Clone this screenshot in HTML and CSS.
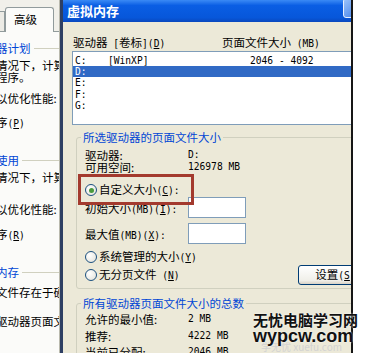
FILE: index.html
```html
<!DOCTYPE html>
<html lang="zh-CN">
<head>
  <meta charset="UTF-8">
  <meta name="viewport" content="width=device-width, initial-scale=1.0">
  <title>虚拟内存</title>
  <link rel="stylesheet" href="styles.css">
</head>
<body>
  <div class="screen">
    <!-- Performance options window (behind) -->
    <div class="side">
      <div class="tabs">
        <span class="tab tab-off"></span>
        <span class="tab tab-on">高级</span>
      </div>
      <div class="side-body">
        <p class="side-label mt10">器计划</p>
        <p class="mt5">情况下，计算机设置</p>
        <p>程序。</p>
        <p class="mt9">以优化性能:</p>
        <p class="mt12">序<span class="m">(<u>P</u>)</span></p>
        <p class="side-label mt24">使用</p>
        <p class="mt5">情况下，计算机设置</p>
        <p class="mt20">以优化性能:</p>
        <p class="mt13">序<span class="m">(<u>R</u>)</span></p>
        <p class="side-label mt24">内存</p>
        <p class="mt8">文件存在于硬盘</p>
        <p class="mt17">驱动器页面文件</p>
      </div>
    </div>

    <!-- Virtual memory dialog -->
    <div class="dialog">
      <div class="titlebar">
        <span class="title">虚拟内存</span>
        <span class="help"></span>
      </div>
      <div class="dialog-body">
        <div class="list-head">
          <span>驱动器<span class="m"> [</span>卷标<span class="m">](<u>D</u>)</span></span>
          <span>页面文件大小<span class="m"> (MB)</span></span>
        </div>
        <div class="drive-list">
          <div class="drive-row"><span>C:</span><span>[WinXP]</span><span>2046 - 4092</span></div>
          <div class="drive-row selected"><span>D:</span></div>
          <div class="drive-row"><span>E:</span></div>
          <div class="drive-row"><span>F:</span></div>
          <div class="drive-row"><span>G:</span></div>
        </div>

        <fieldset class="group group-drive">
          <legend>所选驱动器的页面文件大小</legend>
          <div class="info first"><span>驱动器:</span><span class="m">D:</span></div>
          <div class="info"><span>可用空间:</span><span class="m">126978 MB</span></div>
          <div class="choice marked">
            <span class="radio on"></span>
            <span>自定义大小<span class="m">(<u>C</u>):</span></span>
          </div>
          <div class="size-row r-initial">
            <span>初始大小<span class="m">(MB)(<u>I</u>):</span></span>
            <span class="textbox"></span>
          </div>
          <div class="size-row r-max">
            <span>最大值<span class="m">(MB)(<u>X</u>):</span></span>
            <span class="textbox"></span>
          </div>
          <div class="choice r-system">
            <span class="radio"></span>
            <span>系统管理的大小<span class="m">(<u>Y</u>)</span></span>
          </div>
          <div class="last-row">
            <div class="choice">
              <span class="radio"></span>
              <span>无分页文件<span class="m"> (<u>N</u>)</span></span>
            </div>
            <button type="button" class="btn">设置<span class="m">(<u>S</u>)</span></button>
          </div>
        </fieldset>

        <fieldset class="group group-total">
          <legend>所有驱动器页面文件大小的总数</legend>
          <div class="total first"><span>允许的最小值:</span><span class="m">2 MB</span></div>
          <div class="total"><span>推荐:</span><span class="m">4222 MB</span></div>
          <div class="total"><span>当前已分配:</span><span class="m">2046 MB</span></div>
        </fieldset>
      </div>
    </div>

    <!-- site watermark -->
    <div class="watermark">
      <span class="wm-faint">学无忧 xuefu.com</span>
      <p class="wm-cn">无忧电脑学习网</p>
      <p class="wm-en">wypcw.com</p>
    </div>
  </div>
</body>
</html>
```

FILE: styles.css
```css
/* Global */
* {
  margin: 0;
  padding: 0;
  box-sizing: border-box;
}
body {
  font-family: "Noto Sans CJK SC", sans-serif;
  font-size: 11.5px;
  color: #000;
  background: #fff;
  overflow: hidden;
}
.screen {
  position: relative;
  display: flex;
  height: 353px;
  overflow: hidden;
}
.m {
  font-family: "DejaVu Sans Mono", monospace;
  font-size: 9.6px;
}
u {
  text-decoration-thickness: 1px;
  text-underline-offset: 1px;
}

/* Window behind */
.side {
  width: 60px;
  flex: none;
  background: #fbfbf9;
  border-right: 1px solid #b9b9ad;
  overflow: hidden;
}
.tabs {
  height: 32px;
  display: flex;
  align-items: flex-end;
  background: #f1f0ea;
  border-bottom: 1px solid #919b9c;
}
.tab-off {
  width: 5px;
  height: 21px;
  margin-bottom: -1px;
  background: #ecebe5;
  border: 1px solid #919b9c;
  border-left: none;
}
.tab-on {
  width: 49px;
  height: 25px;
  margin-bottom: -1px;
  padding: 4px 0 0 8px;
  line-height: 14px;
  background: #fbfbf9;
  border: 1px solid #919b9c;
  border-bottom: none;
  border-radius: 3px 3px 0 0;
}
.side-body p {
  margin-left: -4px;
  line-height: 12px;
  white-space: nowrap;
}
.side-body .side-label {
  display: flex;
  align-items: center;
  color: #0046d5;
}
.side-label::after {
  content: "";
  flex: 1;
  height: 1px;
  margin-left: 3px;
  background: #d0d0bf;
}
.mt5 { margin-top: 5px; }
.mt8 { margin-top: 8px; }
.mt9 { margin-top: 9px; }
.mt10 { margin-top: 10px; }
.mt12 { margin-top: 12px; }
.mt13 { margin-top: 13px; }
.mt17 { margin-top: 17px; }
.mt20 { margin-top: 20px; }
.mt24 { margin-top: 24px; }

/* Dialog */
.dialog {
  width: 293px;
  flex: none;
  display: flex;
  flex-direction: column;
  border-left: 3px solid #2e3f63;
  border-right: 2px solid #161616;
}
.titlebar {
  height: 22px;
  flex: none;
  display: flex;
  align-items: center;
  padding-left: 4px;
  overflow: hidden;
  background: linear-gradient(#3a8af5, #0a5ee4 25%, #0757da 80%, #0a48be);
}
.title {
  color: #fff;
  font-size: 13px;
  font-weight: bold;
  line-height: 16px;
}
.help {
  align-self: flex-start;
  width: 21px;
  height: 20px;
  margin: -2px -13px 0 auto;
  border: 1px solid #e8f0ff;
  border-radius: 3px;
  background: linear-gradient(135deg, #9cc4fb, #3275e6);
}
.dialog-body {
  flex: 1;
  background: #ece9d8;
  padding-left: 9px;
  overflow: hidden;
}

/* Drive list */
.list-head {
  display: grid;
  grid-template-columns: 149px auto;
  margin-top: 13px;
  padding-left: 1px;
  line-height: 14px;
  white-space: nowrap;
}
.drive-list {
  width: 300px;
  height: 74px;
  padding-top: 2.5px;
  background: #fff;
  border: 1px solid #7f9db9;
}
.drive-row {
  display: grid;
  grid-template-columns: 33px 142px auto;
  height: 11.4px;
  padding-left: 2px;
  font-family: "DejaVu Sans Mono", monospace;
  font-size: 9.6px;
  line-height: 11.4px;
  white-space: pre;
}
.drive-row.selected {
  background: #316ac5;
  color: #fff;
}

/* Group boxes */
.group {
  width: 290px;
  min-width: 0;
  margin-left: 4px;
  padding: 0 0 0 8px;
  border: 1px solid #d0d0bf;
  border-radius: 3px;
}
.group legend {
  margin-left: -4px;
  padding: 0 2px;
  color: #0046d5;
  line-height: 14px;
}
.group-drive {
  margin-top: 5px;
  padding-bottom: 3px;
}
.group-total {
  margin-top: 7px;
}
.info {
  display: grid;
  grid-template-columns: 103px auto;
  line-height: 12px;
}
.info.first {
  margin-top: 5px;
}
.choice {
  display: flex;
  align-items: center;
  height: 12px;
  line-height: 12px;
  white-space: nowrap;
}
.choice.marked {
  position: relative;
  margin-top: 11px;
}
.choice.marked::after {
  content: "";
  position: absolute;
  left: -7px;
  top: -10px;
  width: 110px;
  height: 25px;
  border: 3px solid #a33a2e;
}
.radio {
  width: 12px;
  height: 12px;
  flex: none;
  margin-right: 2px;
  display: flex;
  align-items: center;
  justify-content: center;
  border: 1px solid #1c5180;
  border-radius: 50%;
  background: radial-gradient(circle at 35% 35%, #fff, #e0dfd6);
}
.radio.on::after {
  content: "";
  width: 5px;
  height: 5px;
  border-radius: 50%;
  background: #4a9a3c;
}
.size-row {
  display: grid;
  grid-template-columns: 103px auto;
  align-items: center;
  height: 21px;
  white-space: nowrap;
}
.r-initial { margin-top: 1px; }
.r-max { margin-top: 5px; }
.r-system { margin-top: 7px; }
.textbox {
  width: 58px;
  height: 21px;
  background: #fff;
  border: 1px solid #7f9db9;
}
.last-row {
  display: grid;
  grid-template-columns: 213px auto;
  align-items: center;
  height: 20px;
  margin-top: 2px;
}
.btn {
  width: 75px;
  height: 20px;
  font: inherit;
  color: #000;
  line-height: 16px;
  border: 1px solid #003c74;
  border-radius: 3px;
  background: linear-gradient(#fff, #f0efe9 80%, #d8d2c6);
}
.total {
  display: grid;
  grid-template-columns: 103px auto;
  line-height: 16.5px;
}
.total.first {
  margin-top: 1px;
}

/* Watermark */
.watermark {
  position: absolute;
  left: 253px;
  top: 312px;
}
.wm-cn {
  position: relative;
  font-size: 15px;
  font-weight: bold;
  line-height: 16px;
  color: #111;
  text-shadow: 0 0 2px #fff;
}
.wm-en {
  position: relative;
  margin-top: -1px;
  font-family: "Liberation Sans", sans-serif;
  font-size: 18px;
  font-weight: bold;
  line-height: 18px;
  color: #111;
  text-shadow: 0 0 2px #fff;
}
.wm-faint {
  position: absolute;
  left: 8px;
  top: 30px;
  font-size: 10px;
  line-height: 10px;
  color: #d2d2d2;
  white-space: nowrap;
}
```
